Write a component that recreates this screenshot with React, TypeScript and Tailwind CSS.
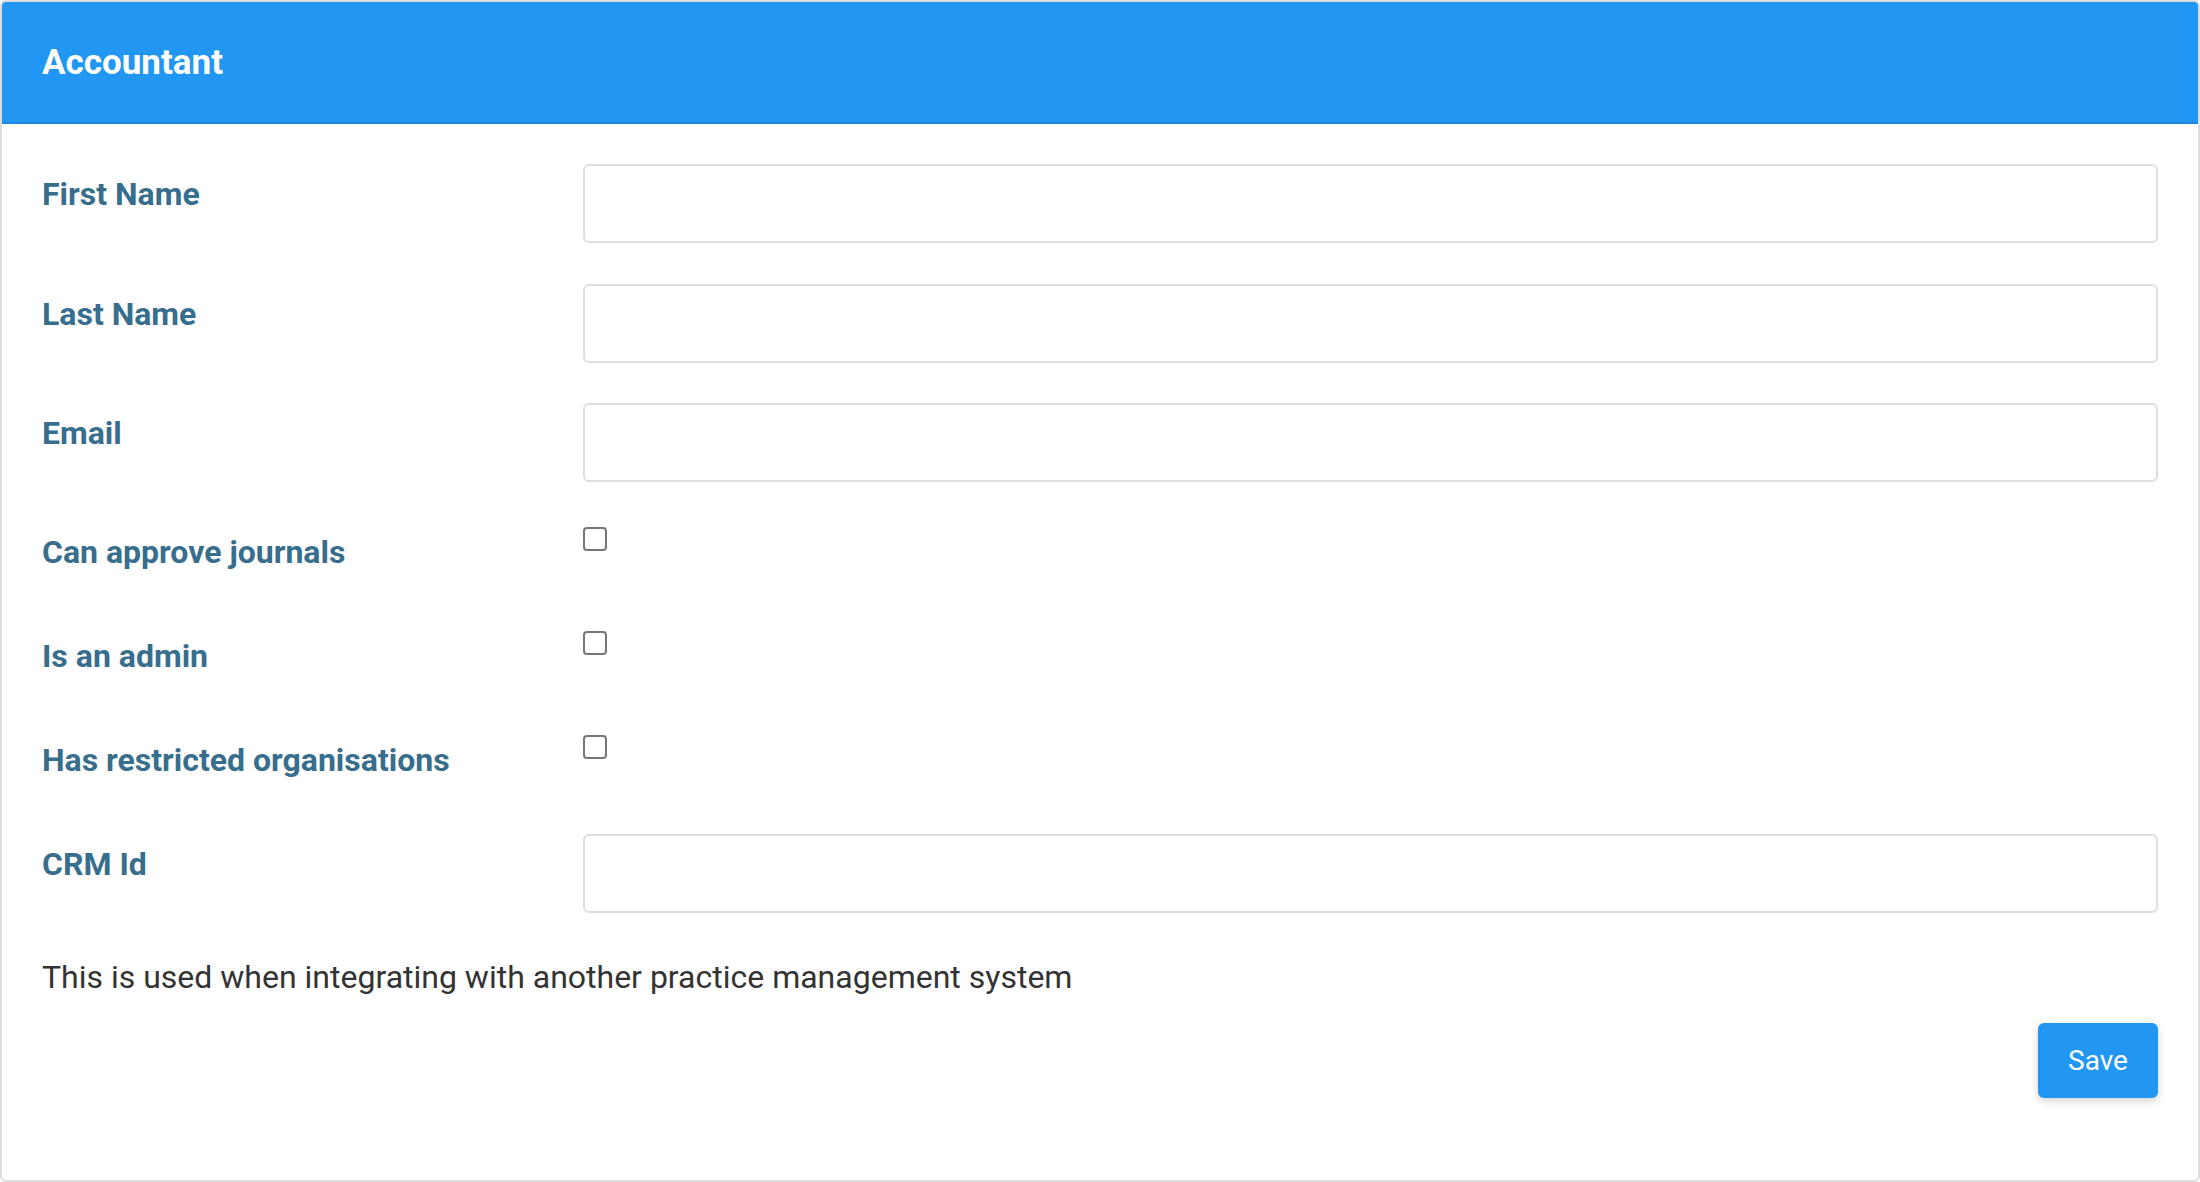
import React from "react";

const font = { fontFamily: "Roboto, 'Noto Sans', sans-serif" };

function TextRow({ label, h }: { label: string; h: string }) {
  return (
    <div className={`flex items-start ${h}`}>
      <label className="w-[541px] shrink-0 pt-[6px] text-[32px] leading-[48px] font-bold text-[#386e8d]">
        {label}
      </label>
      <input
        type="text"
        className="h-[79px] flex-1 rounded-[6px] border-2 border-[#dedede] bg-white px-4 text-[28px] outline-none"
      />
    </div>
  );
}

function CheckRow({ label, h }: { label: string; h: string }) {
  return (
    <div className={`flex items-start ${h}`}>
      <label className="w-[541px] shrink-0 pt-[5px] text-[32px] leading-[48px] font-bold text-[#386e8d]">
        {label}
      </label>
      <div className="mt-[4px] h-[24px] w-[24px] rounded-[4px] border-2 border-[#767676] bg-white" />
    </div>
  );
}

export default function App() {
  return (
    <div style={font} className="h-[1182px] w-[2200px] bg-white">
      <div className="flex h-[1182px] w-[2200px] flex-col overflow-hidden rounded-[6px] border-2 border-[#dddddd] bg-white">
        <div className="flex h-[122px] shrink-0 items-center border-b-2 border-[#1e88e5] bg-[#2196f3] pl-[40px]">
          <h1 className="text-[35px] font-bold text-white leading-none pt-[1px]">Accountant</h1>
        </div>
        <div className="flex flex-col px-[40px] pt-[40px]">
          <TextRow label="First Name" h="h-[120px]" />
          <TextRow label="Last Name" h="h-[119px]" />
          <TextRow label="Email" h="h-[120px]" />
          <CheckRow label="Can approve journals" h="h-[104px]" />
          <CheckRow label="Is an admin" h="h-[104px]" />
          <CheckRow label="Has restricted organisations" h="h-[103px]" />
          <TextRow label="CRM Id" h="h-[79px]" />
          <p className="mt-[40px] text-[32px] leading-[48px] text-[#333333]">
            This is used when integrating with another practice management system
          </p>
          <div className="mt-[22px] flex justify-end">
            <button className="h-[75px] w-[120px] rounded-[6px] bg-[#2196f3] text-[28px] text-white shadow-[0_3px_8px_rgba(0,0,0,0.18)]">
              Save
            </button>
          </div>
        </div>
      </div>
    </div>
  );
}
